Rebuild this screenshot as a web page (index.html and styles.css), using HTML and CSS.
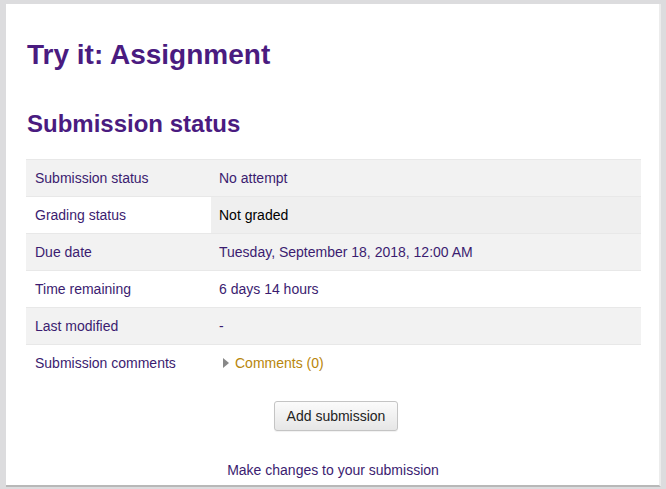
FILE: index.html
```html
<!DOCTYPE html>
<html>
<head>
<meta charset="utf-8">
<link rel="stylesheet" href="styles.css">
</head>
<body>
<div class="page">
  <main class="card">
    <h2 class="title">Try it: Assignment</h2>
    <h3 class="subtitle">Submission status</h3>
    <table class="status">
      <tbody>
        <tr class="odd"><td class="lbl">Submission status</td><td class="val">No attempt</td></tr>
        <tr class="even"><td class="lbl">Grading status</td><td class="val graded">Not graded</td></tr>
        <tr class="odd"><td class="lbl">Due date</td><td class="val">Tuesday, September 18, 2018, 12:00 AM</td></tr>
        <tr class="even"><td class="lbl">Time remaining</td><td class="val">6 days 14 hours</td></tr>
        <tr class="odd"><td class="lbl">Last modified</td><td class="val">-</td></tr>
        <tr class="even"><td class="lbl">Submission comments</td><td class="val"><span class="comments"><span class="tri"></span>Comments (0)</span></td></tr>
      </tbody>
    </table>
    <div class="actions">
      <button class="btn">Add submission</button>
      <p class="hint">Make changes to your submission</p>
    </div>
  </main>
</div>
</body>
</html>
```
FILE: styles.css
```css
html, body {
  margin: 0;
  padding: 0;
  height: 100%;
  overflow: hidden;
}
body {
  background: #dcdcde;
  font-family: "Liberation Sans", Arial, sans-serif;
  font-size: 14px;
  color: #3b1c70;
}
.page {
  padding: 4px 5px 0 6px;
  height: 100%;
  box-sizing: border-box;
}
.card {
  background: #fff;
  height: 483px;
  box-sizing: border-box;
  padding: 1px 19px 0 20px;
  border-right: 2px solid #ececec;
  border-bottom: 2px solid #b8b8b8;
}
.title {
  margin: 34px 0 0 1px;
  font-size: 28px;
  font-weight: bold;
  line-height: 32px;
  color: #4a1b80;
}
.subtitle {
  margin: 40px 0 0 1px;
  font-size: 24px;
  font-weight: bold;
  line-height: 26px;
  color: #4a1b80;
}
.status {
  margin-top: 22px;
  width: 615px;
  border-collapse: collapse;
}
.status td {
  height: 36px;
  padding: 0 8px 0 9px;
  vertical-align: middle;
  border-top: 1px solid #e8e8e8;
}
.status td.lbl {
  width: 168px;
}
.odd td { background: #f2f2f2; }
.even td { background: #fff; }
.status td.graded { background: #efefef; color: #000; }
.status .val { padding-left: 8px; }
.comments {
  color: #b8860b;
  display: inline-flex;
  align-items: center;
  margin-left: 4px;
}
.tri {
  display: inline-block;
  width: 0;
  height: 0;
  border-top: 5px solid transparent;
  border-bottom: 5px solid transparent;
  border-left: 6px solid #888;
  margin-right: 6px;
}
.actions {
  display: flex;
  flex-direction: column;
  align-items: center;
  margin-top: 20px;
}
.btn {
  font-family: "Liberation Sans", Arial, sans-serif;
  font-size: 14px;
  color: #222;
  height: 30px;
  padding: 0 12px;
  margin-left: 6px;
  border: 1px solid #c4c4c4;
  border-radius: 3px;
  background: linear-gradient(#fbfbfb, #e6e6e6);
  box-shadow: 0 1px 1px rgba(0,0,0,0.06);
}
.hint {
  margin: 31px 0 0 0;
  line-height: 16px;
}
```
